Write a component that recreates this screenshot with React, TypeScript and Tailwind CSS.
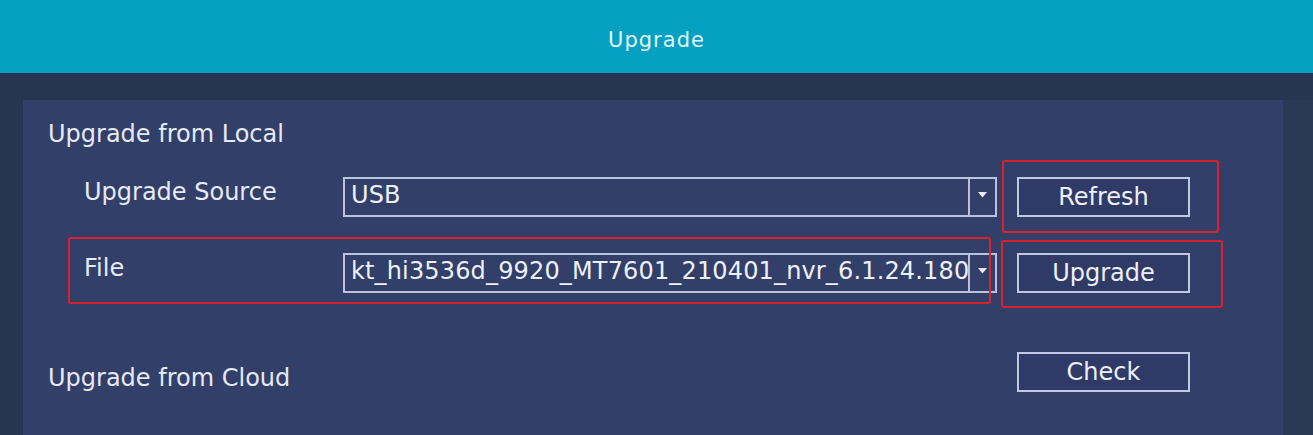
import type { ReactNode } from 'react'

function Select({ value }: { value: string }) {
  return (
    <div className="flex h-[40px] w-[654px] border-2 border-[#bcc2de]">
      <div className="flex-1 overflow-hidden whitespace-nowrap pl-[6px] pt-[2px] leading-[28px] tracking-[0.15px] text-[#eef0f8]">
        {value}
      </div>
      <div className="flex w-[27px] shrink-0 justify-center border-l-2 border-[#bcc2de] pt-[13px]">
        <svg width="9" height="6" viewBox="0 0 9 6">
          <polygon points="0,0 9,0 4.5,5.5" fill="#e8ebf5" />
        </svg>
      </div>
    </div>
  )
}

function Button({ children }: { children: ReactNode }) {
  return (
    <div className="flex h-[40px] w-[173px] shrink-0 items-center justify-center border-2 border-[#c3c8e2] bg-[#2f3b66] leading-[28px] text-[#eef0f8]">
      {children}
    </div>
  )
}

function Row({ label, children }: { label: string; children: ReactNode }) {
  return (
    <div className="flex items-start">
      <div className="mt-[1px] w-[259px] shrink-0 leading-[28px] text-[#e6eaf5]">{label}</div>
      {children}
    </div>
  )
}

export default function App() {
  return (
    <div className="h-[435px] w-[1313px] overflow-hidden bg-[#283550] font-['DejaVu_Sans',sans-serif] text-[24px]">
      <header className="flex h-[73px] items-center justify-center bg-[#02a1c1] pt-[8px] text-[21px] tracking-[1px] text-[#e2f6fc]">
        Upgrade
      </header>
      <div className="h-[3px] bg-[#2d3159]" />

      <div className="flex pl-[23px] pt-[24px]">
        <div className="relative h-[335px] w-[1260px] bg-[#323f69]">
          <div className="pl-[25px] pt-[20px] leading-[28px] text-[#e6eaf5]">Upgrade from Local</div>

          <div className="mt-[29px] pl-[61px]">
            <Row label="Upgrade Source">
              <Select value="USB" />
              <div className="ml-[20px]">
                <Button>Refresh</Button>
              </div>
            </Row>
            <div className="mt-[36px]">
              <Row label="File">
                <Select value="kt_hi3536d_9920_MT7601_210401_nvr_6.1.24.180" />
                <div className="ml-[20px]">
                  <Button>Upgrade</Button>
                </div>
              </Row>
            </div>
          </div>

          <div className="mt-[59px] flex items-start pl-[25px]">
            <div className="mt-[12px] w-[969px] shrink-0 leading-[28px] text-[#e6eaf5]">Upgrade from Cloud</div>
            <Button>Check</Button>
          </div>

          {/* annotation boxes */}
          <div className="absolute left-[979px] top-[60px] h-[73px] w-[217px] rounded-[3px] border-2 border-[#d8222e]" />
          <div className="absolute left-[45px] top-[137px] h-[67px] w-[923px] rounded-[3px] border-2 border-[#d8222e]" />
          <div className="absolute left-[978px] top-[140px] h-[68px] w-[222px] rounded-[3px] border-2 border-[#d8222e]" />
        </div>
        <div className="h-[335px] w-[30px] bg-[#2b3955]" />
      </div>
    </div>
  )
}
